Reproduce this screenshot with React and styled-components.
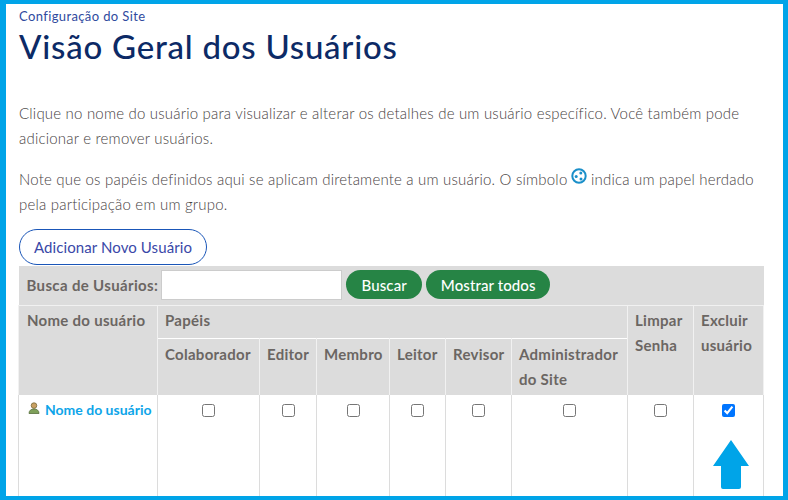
import React from "react";
import styled, { createGlobalStyle } from "styled-components";

const Global = createGlobalStyle`
  html, body { margin: 0; padding: 0; background: #fff; }
  body { font-family: "Lato", "Liberation Sans", sans-serif; }
`;
const Frame = styled.div`
  box-sizing: border-box;
  width: 788px;
  height: 500px;
  overflow: hidden;
  border-style: solid;
  border-color: #00a4e8;
  border-width: 4px 5px 4px 6px;
  padding: 3px 20px 0 13px;
  background: #fff;
`;
const Crumb = styled.div`
  font-size: 13px;
  line-height: 18px;
  letter-spacing: 0.38px;
  color: #2f4a9e;
`;
const Title = styled.h1`
  margin: -1px 0 0;
  font-size: 33px;
  line-height: 44px;
  font-weight: 500;
  letter-spacing: 0.76px;
  color: #0c2a66;
`;
const Para = styled.p`
  margin: 0 0 16px;
  font-size: 15px;
  line-height: 25px;
  font-weight: 300;
  letter-spacing: 0.2px;
  color: #47423f;
  &:first-of-type { margin-top: 33px; }
  &:last-of-type { margin-bottom: 12px; }
`;
const Glyph = styled.svg`
  width: 16px;
  height: 16px;
  vertical-align: 4px;
  margin: -3px 0 -3px -1px;
`;
const AddButton = styled.button`
  display: block;
  box-sizing: border-box;
  width: 188px;
  height: 36px;
  margin: 0 0 1px;
  padding: 0;
  background: #fff;
  border: 1px solid #1a56b8;
  border-radius: 18px;
  font: 400 15px "Lato", sans-serif;
  letter-spacing: 0.1px;
  color: #3a48a8;
`;
const Table = styled.table`
  table-layout: fixed;
  width: 745px;
  margin-left: -1px;
  border-collapse: collapse;
  font-size: 15px;
`;
const Th = styled.th`
  box-sizing: border-box;
  padding: ${p => (p.$sub ? "3px 7px 3px" : "2px 7px 5px")};
  padding-left: ${p => (p.$first ? 8 : 7)}px;
  background: #dcdcdc;
  border: 1px solid #f1f1f1;
  border-top-color: ${p => (p.$sub ? "#fff" : "#f1f1f1")};
  border-bottom: 0;
  color: #6b6663;
  font-weight: 700;
  text-align: left;
  vertical-align: top;
  line-height: 25px;
  letter-spacing: 0.28px;
`;
const SearchCell = styled.td`
  height: 37px;
  padding: 0 8px 2px;
  background: #dcdcdc;
  border-bottom: 1px solid #f1f1f1;
`;
const SearchRow = styled.div`
  display: flex;
  align-items: center;
  color: #6b6663;
  font-weight: 700;
  letter-spacing: 0.35px;
`;
const SearchInput = styled.input`
  box-sizing: border-box;
  width: 181px;
  height: 30px;
  margin: 0 4px 0 3px;
  background: #fff;
  border: 1px solid #ccc;
`;
const GreenButton = styled.button`
  box-sizing: border-box;
  width: ${p => p.$w}px;
  height: 29px;
  margin-right: 4px;
  padding: 0;
  background: #268445;
  border: 0;
  border-radius: 15px;
  color: #fff;
  font: 500 15px "Lato", sans-serif;
  letter-spacing: 0.1px;
`;
const Td = styled.td`
  box-sizing: border-box;
  height: 101px;
  padding: 9px 0 0;
  border: 1px solid #dcdcdc;
  border-top: 0;
  border-bottom: 0;
  text-align: center;
  vertical-align: top;
  line-height: 0;
`;
const UserCell = styled(Td)`
  padding: 5px 0 0 9px;
  text-align: left;
  line-height: 18px;
`;
const UserLink = styled.a`
  color: #0ea5e9;
  font-size: 14px;
  font-weight: 700;
  letter-spacing: 0;
`;
const UserIcon = styled.svg`
  width: 12px;
  height: 12px;
  margin-right: 5px;
  vertical-align: 1px;
`;
const Check = styled.input`
  width: 13px;
  height: 13px;
  margin: 0;
`;
const Arrow = styled.svg`
  display: block;
  width: 36px;
  height: 49px;
  margin: 23px auto 0;
  transform: translateX(2px);
`;

const widths = [139, 102, 57, 73, 56, 66, 116, 66, 70];
const roles = ["Colaborador", "Editor", "Membro", "Leitor", "Revisor"];

export default function App() {
  return (
    <>
      <Global />
      <Frame>
        <Crumb>Configuração do Site</Crumb>
        <Title>Visão Geral dos Usuários</Title>
        <Para>
          Clique no nome do usuário para visualizar e alterar os detalhes de um usuário específico. Você também pode adicionar e remover usuários.
        </Para>
        <Para>
          Note que os papéis definidos aqui se aplicam diretamente a um usuário. O símbolo{" "}
          <Glyph viewBox="0 0 16 16">
            <circle cx="8" cy="8" r="6.7" fill="#fff" stroke="#1a8fc9" strokeWidth="2" />
            <circle cx="5.2" cy="8.6" r="1.5" fill="#1a8fc9" />
            <circle cx="9.8" cy="5" r="1.5" fill="#1a8fc9" />
            <circle cx="10" cy="11" r="1.5" fill="#1a8fc9" />
          </Glyph>{" "}
          indica um papel herdado pela participação em um grupo.
        </Para>
        <AddButton>Adicionar Novo Usuário</AddButton>
        <Table>
          <colgroup>
            {widths.map((w, i) => <col key={i} width={w} />)}
          </colgroup>
          <tbody>
            <tr>
              <SearchCell colSpan={9}>
                <SearchRow>
                  Busca de Usuários:
                  <SearchInput />
                  <GreenButton $w={76}>Buscar</GreenButton>
                  <GreenButton $w={124}>Mostrar todos</GreenButton>
                </SearchRow>
              </SearchCell>
            </tr>
            <tr>
              <Th rowSpan={2} $first>Nome do usuário</Th>
              <Th colSpan={6}>Papéis</Th>
              <Th rowSpan={2}>Limpar Senha</Th>
              <Th rowSpan={2}>Excluir usuário</Th>
            </tr>
            <tr>
              {roles.map(r => <Th key={r} $sub>{r}</Th>)}
              <Th $sub>Administrador do Site</Th>
            </tr>
            <tr>
              <UserCell>
                <UserIcon viewBox="0 0 12 12">
                  <circle cx="6" cy="3.600" r="2.800" fill="#c9a063" stroke="#7a6a3a" strokeWidth="0.8" />
                  <path d="M1 11.500c0-3 2-4.500 5-4.500s5 1.500 5 4.500z" fill="#7fa05a" stroke="#58703c" strokeWidth="0.8" />
                </UserIcon>
                <UserLink>Nome do usuário</UserLink>
              </UserCell>
              {[...roles, "admin", "clear"].map(r => (
                <Td key={r}><Check type="checkbox" /></Td>
              ))}
              <Td>
                <Check type="checkbox" defaultChecked />
                <Arrow viewBox="0 0 36 49">
                  <path d="M18 0 L36 26 L28 26 L28 47 Q28 49 26 49 L10 49 Q8 49 8 47 L8 26 L0 26 Z" fill="#00a4e8" />
                </Arrow>
              </Td>
            </tr>
          </tbody>
        </Table>
      </Frame>
    </>
  );
}
